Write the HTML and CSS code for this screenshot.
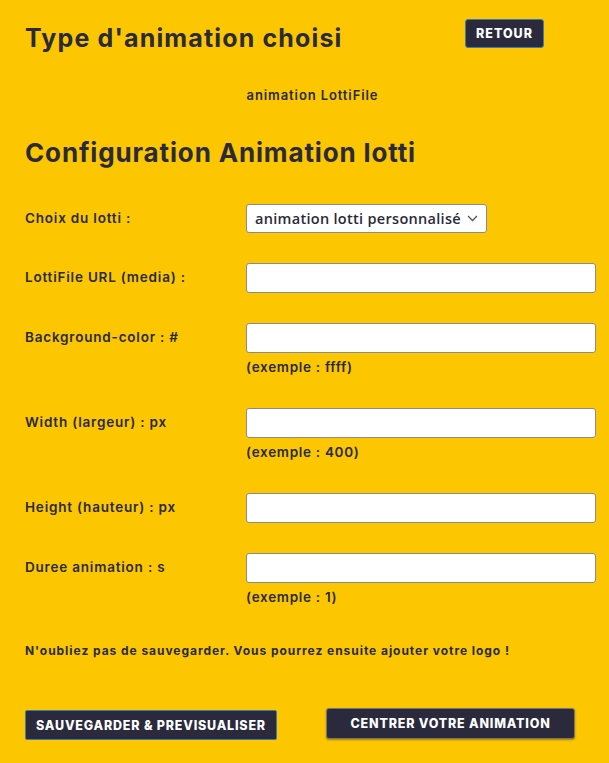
FILE: index.html
```html
<!DOCTYPE html>
<html lang="fr">
<head>
<meta charset="utf-8">
<title>Configuration Animation lotti</title>
<link rel="stylesheet" href="styles.css">
</head>
<body>
<div class="page">
  <header class="header">
    <h1 class="title">Type d'animation choisi</h1>
    <button class="btn btn-retour" type="button">RETOUR</button>
  </header>
  <p class="chosen">animation LottiFile</p>

  <h2 class="subtitle">Configuration Animation lotti</h2>

  <form class="form">
    <div class="row row-select">
      <label class="label">Choix du lotti :</label>
      <div class="field">
        <div class="select">
          <span>animation lotti personnalisé</span>
          <svg class="chev" width="11" height="7" viewBox="0 0 11 7"><path d="M1 1l4.5 4.5L10 1" fill="none" stroke="#555" stroke-width="1.3"/></svg>
        </div>
      </div>
    </div>
    <div class="row">
      <label class="label">LottiFile URL (media) :</label>
      <div class="field"><input class="input" type="text"></div>
    </div>
    <div class="row">
      <label class="label">Background-color : #</label>
      <div class="field"><input class="input" type="text"><span class="hint">(exemple : ffff)</span></div>
    </div>
    <div class="row">
      <label class="label">Width (largeur) : px</label>
      <div class="field"><input class="input" type="text"><span class="hint">(exemple : 400)</span></div>
    </div>
    <div class="row">
      <label class="label">Height (hauteur) : px</label>
      <div class="field"><input class="input" type="text"></div>
    </div>
    <div class="row">
      <label class="label">Duree animation : s</label>
      <div class="field"><input class="input" type="text"><span class="hint">(exemple : 1)</span></div>
    </div>
  </form>

  <p class="note">N'oubliez pas de sauvegarder. Vous pourrez ensuite ajouter votre logo !</p>

  <div class="actions">
    <button class="btn btn-save" type="button">SAUVEGARDER &amp; PREVISUALISER</button>
    <button class="btn btn-center" type="button">CENTRER VOTRE ANIMATION</button>
  </div>
</div>
</body>
</html>
```
FILE: styles.css
```css
* { box-sizing: border-box; }
html, body { margin: 0; padding: 0; }
body {
  background: #fcc600;
  color: #2a2a3a;
  font-family: Inter, "Noto Sans", sans-serif;
  width: 609px;
  height: 763px;
  overflow: hidden;
}
.page {
  padding: 19px 13px 0 25px;
}
.header {
  display: grid;
  grid-template-columns: 440px auto;
  align-items: start;
}
.title {
  margin: 4px 0 0;
  font-size: 25px;
  font-weight: 700;
  line-height: 30px;
  letter-spacing: 1.15px;
}
.btn {
  font-family: Inter, "Noto Sans", sans-serif;
  font-weight: 800;
  color: #fff;
  background: #2a2a3c;
  cursor: pointer;
}
.btn-retour {
  width: 79px;
  height: 29px;
  font-size: 12.5px;
  letter-spacing: 1px;
  border: 1px solid #3a7cb0;
  border-radius: 3px;
  padding: 0;
  justify-self: start;
}
.chosen {
  margin: 34px 0 0;
  text-align: center;
  font-size: 13px;
  font-weight: 600;
  line-height: 16px;
  letter-spacing: 0.9px;
  padding-left: 4px;
}
.subtitle {
  margin: 34px 0 0;
  font-size: 26px;
  font-weight: 700;
  line-height: 32px;
  letter-spacing: 0.85px;
}
.form {
  margin-top: 35px;
  display: flex;
  flex-direction: column;
  gap: 30px;
}
.row {
  display: grid;
  grid-template-columns: 221px 1fr;
  align-items: start;
}
.label {
  font-size: 13.5px;
  font-weight: 600;
  line-height: 16px;
  letter-spacing: 0.8px;
  padding-top: 6px;
}
.field {
  display: flex;
  flex-direction: column;
}
.select {
  width: 241px;
  height: 29px;
  background: #fff;
  border: 1px solid #8a8a95;
  border-radius: 3px;
  display: flex;
  align-items: center;
  justify-content: space-between;
  padding: 0 8px 0 8px;
  font-family: "Open Sans", "Noto Sans", sans-serif;
  font-size: 14.5px;
  font-weight: 600;
  letter-spacing: 0.3px;
  color: #2a2a3a;
}
.input {
  width: 350px;
  height: 30px;
  background: #fff;
  border: 1px solid #8a8a95;
  border-radius: 3px;
  margin: 0;
}
.hint {
  margin-top: 6px;
  font-size: 13.5px;
  font-weight: 600;
  line-height: 16px;
  letter-spacing: 0.7px;
  padding-bottom: 3px;
}
.note {
  margin: 36px 0 0;
  font-size: 12px;
  font-weight: 700;
  line-height: 14px;
  letter-spacing: 0.95px;
}
.actions {
  margin-top: 50px;
  display: grid;
  grid-template-columns: 301px auto;
  align-items: start;
}
.btn-save {
  width: 252px;
  height: 30px;
  border: 1px solid #3a7cb0;
  border-radius: 2px;
  font-size: 12.5px;
  letter-spacing: 0.8px;
  padding: 0;
  margin-top: 2px;
}
.btn-center {
  width: 249px;
  height: 31px;
  border: 1px solid #777;
  border-radius: 3px;
  box-shadow: 0 1px 2px rgba(0,0,0,0.35);
  font-size: 12.5px;
  letter-spacing: 0.8px;
  padding: 0;
}
```
